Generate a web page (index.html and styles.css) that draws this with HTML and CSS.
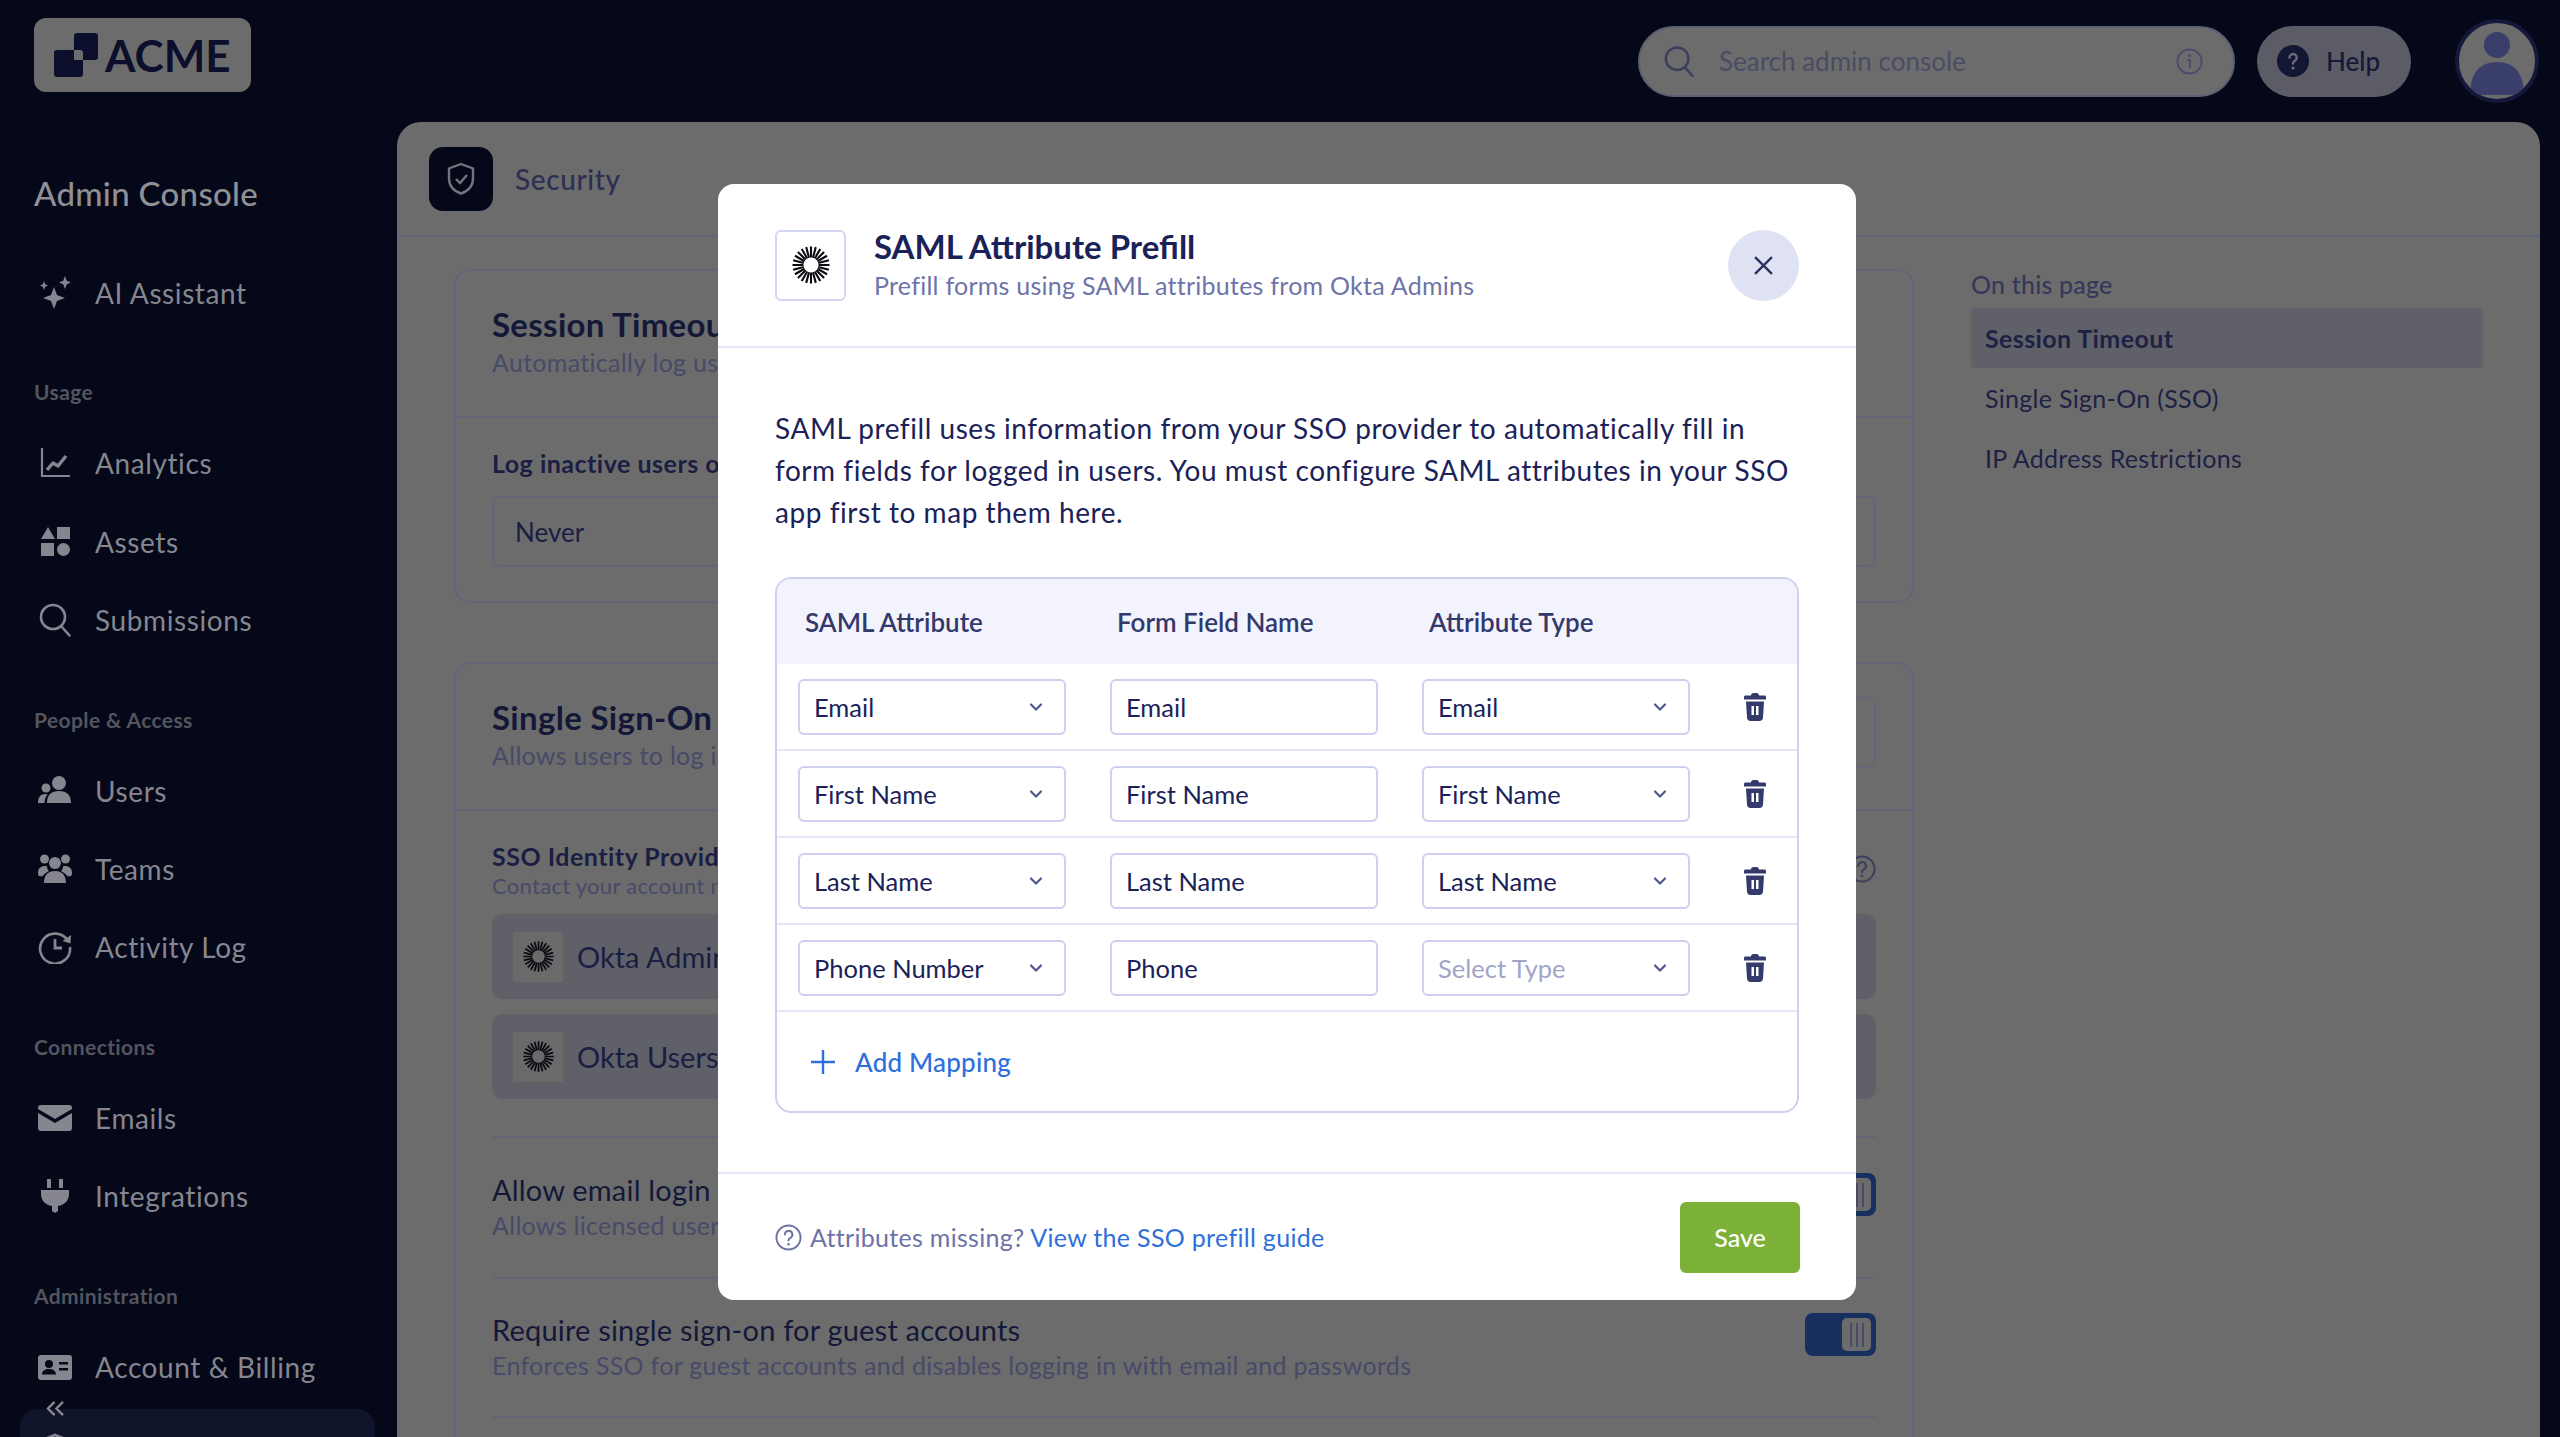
FILE: index.html
```html
<!DOCTYPE html>
<html lang="en">

<head>
    <meta charset="UTF-8" />
    <meta name="viewport" content="width=device-width, initial-scale=1.0" />
    <title>Security - Admin Console</title>
    <link rel="stylesheet" href="styles.css">
</head>

<body>
    <svg class="sprites" aria-hidden="true">
        <symbol id="okta" viewBox="0 0 40 40">
            <g fill="none" stroke="currentColor" stroke-width="2.100">
                <path d="M1.500 20H12.500M27.500 20H38.500" />
                <path d="M1.500 20H12.500M27.500 20H38.500" transform="rotate(15 20 20)" />
                <path d="M1.500 20H12.500M27.500 20H38.500" transform="rotate(30 20 20)" />
                <path d="M1.500 20H12.500M27.500 20H38.500" transform="rotate(45 20 20)" />
                <path d="M1.500 20H12.500M27.500 20H38.500" transform="rotate(60 20 20)" />
                <path d="M1.500 20H12.500M27.500 20H38.500" transform="rotate(75 20 20)" />
                <path d="M1.500 20H12.500M27.500 20H38.500" transform="rotate(90 20 20)" />
                <path d="M1.500 20H12.500M27.500 20H38.500" transform="rotate(105 20 20)" />
                <path d="M1.500 20H12.500M27.500 20H38.500" transform="rotate(120 20 20)" />
                <path d="M1.500 20H12.500M27.500 20H38.500" transform="rotate(135 20 20)" />
                <path d="M1.500 20H12.500M27.500 20H38.500" transform="rotate(150 20 20)" />
                <path d="M1.500 20H12.500M27.500 20H38.500" transform="rotate(165 20 20)" />
            </g>
        </symbol>
        <symbol id="trash" viewBox="0 0 22 28">
            <path fill="currentColor" fill-rule="evenodd" d="M7 2.500C7 1 8 0 9.500 0h3C14 0 15 1 15 2.500h5.500C21.400 2.500 22 3.100 22 4v2.500H0V4c0-.9.6-1.500 1.500-1.500zM2 8.500h18l-1 16c-.1 2-1.500 3.500-3.500 3.500h-9C4.500 28 3.100 26.500 3 24.500zM7.500 13v9h2.500v-9zM12 13v9h2.500v-9z" />
        </symbol>
        <symbol id="chev" viewBox="0 0 12 8">
            <path d="M1 1.500l5 5 5-5" fill="none" stroke="currentColor" stroke-width="2.200" stroke-linecap="round" stroke-linejoin="round" />
        </symbol>
        <symbol id="search" viewBox="0 0 32 34">
            <circle cx="14" cy="14" r="12" fill="none" stroke="currentColor" stroke-width="2.600" />
            <path d="M22.500 23.500l8 9" fill="none" stroke="currentColor" stroke-width="2.600" stroke-linecap="round" />
        </symbol>
        <symbol id="grip" viewBox="0 0 14 24">
            <path d="M1 0v24M7 0v24M13 0v24" stroke="currentColor" stroke-width="1.800" />
        </symbol>
        <symbol id="help" viewBox="0 0 28 28">
            <circle cx="14" cy="14" r="12.500" fill="none" stroke="currentColor" stroke-width="2" />
            <path d="M10.200 11a3.900 3.900 0 1 1 5.800 3.400c-1.300.7-2 1.400-2 2.800" fill="none" stroke="currentColor" stroke-width="2" stroke-linecap="round" />
            <circle cx="14" cy="21" r="1.300" fill="currentColor" />
        </symbol>
    </svg>

    <div class="app">
        <aside class="sidebar">
            <div class="logo">
                <svg class="logo-mark" viewBox="0 0 44 44">
                    <path fill="#0b0f2c" d="M20 3a3 3 0 0 1 3-3h18a3 3 0 0 1 3 3v21a3 3 0 0 1-3 3H29V20a3 3 0 0 0-3-3h-6z" />
                    <path fill="#0b0f2c" d="M3 17h17v10h9v14a3 3 0 0 1-3 3H3a3 3 0 0 1-3-3V20a3 3 0 0 1 3-3z" />
                </svg>
                <span>ACME</span>
            </div>
            <h2 class="console-title">Admin Console</h2>

            <a class="nav-item first">
                <svg class="nav-icon" viewBox="0 0 34 34"><path fill="currentColor" d="M16 11l3 8 8 3-8 3-3 8-3-8-8-3 8-3zM27 0l1.800 4.700L33 6.500l-4.200 1.800L27 13l-1.800-4.700L21 6.500l4.200-1.800zM6 5l1.200 3.300L10 9.500l-2.800 1.200L6 14l-1.200-3.300L2 9.500l2.800-1.200z" /></svg>
                AI Assistant
            </a>

            <div class="nav-label">Usage</div>
            <a class="nav-item">
                <svg class="nav-icon" viewBox="0 0 34 34"><path d="M4 2v28h28" fill="none" stroke="currentColor" stroke-width="2.200" /><path d="M9 24l6-7 5 3 8-10" fill="none" stroke="currentColor" stroke-width="3.400" stroke-linejoin="round" /></svg>
                Analytics
            </a>
            <a class="nav-item">
                <svg class="nav-icon" viewBox="0 0 34 34"><path fill="currentColor" d="M10 2l7 12H3zM19 2h13v12H19zM3 18h13v13H3z" /><circle cx="25.500" cy="24.500" r="6.500" fill="currentColor" /></svg>
                Assets
            </a>
            <a class="nav-item">
                <svg class="nav-icon" viewBox="0 0 32 34"><use href="#search" /></svg>
                Submissions
            </a>

            <div class="nav-label">People &amp; Access</div>
            <a class="nav-item">
                <svg class="nav-icon" viewBox="0 0 34 34"><circle cx="21" cy="9" r="7" fill="currentColor" /><circle cx="8" cy="14" r="4.500" fill="currentColor" /><path fill="currentColor" d="M9 29c0-8 4-12 12-12s12 4 12 12zM0 29c0-5 2-9 7-9 1 0 2 .2 2.500.5C7.500 22.500 6.500 25.500 6.500 29z" /></svg>
                Users
            </a>
            <a class="nav-item">
                <svg class="nav-icon" viewBox="0 0 34 34"><circle cx="17" cy="11" r="6" fill="currentColor" /><circle cx="6.500" cy="7" r="4.500" fill="currentColor" /><circle cx="27.500" cy="7" r="4.500" fill="currentColor" /><path fill="currentColor" d="M6 31c0-8 4-12 11-12s11 4 11 12zM0 21c0-5 3-7 7-7l2 .3c0 2 .8 3.700 2 5-3 1-5 3-6.500 5H2c-1.200 0-2-1.200-2-3.300zM34 21c0-5-3-7-7-7l-2 .3c0 2-.8 3.700-2 5 3 1 5 3 6.500 5H32c1.200 0 2-1.200 2-3.300z" /></svg>
                Teams
            </a>
            <a class="nav-item">
                <svg class="nav-icon" viewBox="0 0 34 34"><path d="M30 11a15 15 0 1 0 2 6" fill="none" stroke="currentColor" stroke-width="2.600" /><path fill="currentColor" d="M33 5l-.5 8.500-8-2.500z" /><path d="M17 9v9h7" fill="none" stroke="currentColor" stroke-width="2.800" /></svg>
                Activity Log
            </a>

            <div class="nav-label">Connections</div>
            <a class="nav-item">
                <svg class="nav-icon" viewBox="0 0 34 34"><path fill="currentColor" d="M3 4h28a3 3 0 0 1 3 3v1L17 18 0 8V7a3 3 0 0 1 3-3zM0 12l17 10 17-10v15a3 3 0 0 1-3 3H3a3 3 0 0 1-3-3z" /></svg>
                Emails
            </a>
            <a class="nav-item">
                <svg class="nav-icon" viewBox="0 0 34 34"><path fill="currentColor" d="M9 0h4v9H9zM21 0h4v9h-4zM3 11h28v4c0 6-4 11-11 12v5l-3 2-3-2v-5C7 26 3 21 3 15z" /></svg>
                Integrations
            </a>

            <div class="nav-label">Administration</div>
            <a class="nav-item">
                <svg class="nav-icon" viewBox="0 0 34 34"><path fill="currentColor" fill-rule="evenodd" d="M3 5h28a3 3 0 0 1 3 3v19a3 3 0 0 1-3 3H3a3 3 0 0 1-3-3V8a3 3 0 0 1 3-3zM11 10a4 4 0 1 0 0 8 4 4 0 0 0 0-8zM4 24.500h14c0-3.500-3-5.500-7-5.500s-7 2-7 5.500zM21 12v2.500h9V12zM21 18v2.500h9V18z" /></svg>
                Account &amp; Billing
            </a>
            <a class="nav-item current">
                <svg class="nav-icon" viewBox="0 0 34 34"><path d="M17 2l13 5v10c0 8-6 13-13 15C10 30 4 25 4 17V7z" fill="none" stroke="currentColor" stroke-width="2.600" /></svg>
                Security
            </a>

            <svg class="collapse" viewBox="0 0 20 16"><path d="M9 1L2 8l7 7M18 1l-7 7 7 7" fill="none" stroke="currentColor" stroke-width="2.600" /></svg>
        </aside>

        <div class="content">
            <header class="topbar">
                <div class="search">
                    <svg class="search-icon"><use href="#search" /></svg>
                    <span class="search-text">Search admin console</span>
                    <svg class="info-icon" viewBox="0 0 28 28"><circle cx="14" cy="14" r="12.500" fill="none" stroke="currentColor" stroke-width="2" /><path d="M11.500 12.500H14.500V21" fill="none" stroke="currentColor" stroke-width="2" /><circle cx="14" cy="8" r="1.500" fill="currentColor" /></svg>
                </div>
                <div class="help-pill">
                    <svg class="help-icon" viewBox="0 0 32 32"><circle cx="16" cy="16" r="16" fill="#141733" /><path d="M12.500 12.500a3.600 3.600 0 1 1 5.400 3.200c-1.200.7-1.900 1.300-1.900 2.700" fill="none" stroke="#6c6c78" stroke-width="2.400" stroke-linecap="round" /><circle cx="16" cy="23" r="1.600" fill="#6c6c78" /></svg>
                    Help
                </div>
                <div class="avatar">
                    <svg viewBox="0 0 76 76"><circle cx="38" cy="22" r="13" fill="#3a3e6b" /><path fill="#3a3e6b" d="M11 72c0-22 10-33 27-33s27 11 27 33z" /></svg>
                </div>
            </header>

            <main class="panel">
                <div class="panel-head">
                    <div class="panel-icon">
                        <svg viewBox="0 0 30 34"><path d="M15 2l12 4.500v10c0 7.500-5 12.500-12 15-7-2.500-12-7.500-12-15v-10z" fill="none" stroke="#74747c" stroke-width="2.400" /><path d="M10 17l4 4 7-8" fill="none" stroke="#74747c" stroke-width="2.400" /></svg>
                    </div>
                    <span class="panel-title">Security</span>
                </div>

                <div class="panel-body">
                    <div class="cards">
                        <section class="card">
                            <div class="card-head">
                                <h3>Session Timeout</h3>
                                <p>Automatically log users out after a period of inactivity</p>
                            </div>
                            <div class="card-body">
                                <div class="strong-label">Log inactive users out after</div>
                                <div class="page-input">Never</div>
                            </div>
                        </section>

                        <section class="card">
                            <div class="card-head sso-head">
                                <div>
                                    <h3>Single Sign-On (SSO)</h3>
                                    <p>Allows users to log in with your identity provider</p>
                                </div>
                                <div class="head-button"></div>
                            </div>
                            <div class="card-body">
                                <div class="provider-top">
                                    <div>
                                        <div class="strong-label tight">SSO Identity Providers</div>
                                        <p class="small-note">Contact your account manager to change providers</p>
                                    </div>
                                    <svg class="round-help"><use href="#help" /></svg>
                                </div>
                                <div class="provider">
                                    <div class="okta-box"><svg><use href="#okta" /></svg></div>
                                    Okta Admins
                                </div>
                                <div class="provider">
                                    <div class="okta-box"><svg><use href="#okta" /></svg></div>
                                    Okta Users
                                </div>
                                <div class="setting first-setting">
                                    <div class="setting-text">
                                        <div class="setting-title">Allow email login</div>
                                        <p>Allows licensed users to log in with email and password</p>
                                    </div>
                                    <div class="toggle"><span class="knob"><svg><use href="#grip" /></svg></span></div>
                                </div>
                                <div class="setting">
                                    <div class="setting-text">
                                        <div class="setting-title">Require single sign-on for guest accounts</div>
                                        <p>Enforces SSO for guest accounts and disables logging in with email and passwords</p>
                                    </div>
                                    <div class="toggle"><span class="knob"><svg><use href="#grip" /></svg></span></div>
                                </div>
                            </div>
                        </section>
                    </div>

                    <nav class="toc">
                        <div class="toc-title">On this page</div>
                        <a class="toc-item active">Session Timeout</a>
                        <a class="toc-item">Single Sign-On (SSO)</a>
                        <a class="toc-item">IP Address Restrictions</a>
                    </nav>
                </div>
            </main>
        </div>
    </div>

    <div class="modal">
        <div class="modal-head">
            <div class="modal-icon"><svg><use href="#okta" /></svg></div>
            <div class="modal-heading">
                <h2>SAML Attribute Prefill</h2>
                <p>Prefill forms using SAML attributes from Okta Admins</p>
            </div>
            <button class="close-button">
                <svg viewBox="0 0 18 18"><path d="M1 1l16 16M17 1L1 17" fill="none" stroke="#2b3160" stroke-width="2.200" /></svg>
            </button>
        </div>

        <div class="modal-body">
            <p class="intro">SAML prefill uses information from your SSO provider to automatically fill in form fields for logged in users. You must configure SAML attributes in your SSO app first to map them here.</p>

            <div class="mapping">
                <div class="map-row map-head">
                    <div>SAML Attribute</div>
                    <div>Form Field Name</div>
                    <div>Attribute Type</div>
                </div>
                <div class="map-row">
                    <div class="field select">Email<svg><use href="#chev" /></svg></div>
                    <div class="field">Email</div>
                    <div class="field select">Email<svg><use href="#chev" /></svg></div>
                    <svg class="trash"><use href="#trash" /></svg>
                </div>
                <div class="map-row">
                    <div class="field select">First Name<svg><use href="#chev" /></svg></div>
                    <div class="field">First Name</div>
                    <div class="field select">First Name<svg><use href="#chev" /></svg></div>
                    <svg class="trash"><use href="#trash" /></svg>
                </div>
                <div class="map-row">
                    <div class="field select">Last Name<svg><use href="#chev" /></svg></div>
                    <div class="field">Last Name</div>
                    <div class="field select">Last Name<svg><use href="#chev" /></svg></div>
                    <svg class="trash"><use href="#trash" /></svg>
                </div>
                <div class="map-row">
                    <div class="field select">Phone Number<svg><use href="#chev" /></svg></div>
                    <div class="field">Phone</div>
                    <div class="field select placeholder">Select Type<svg><use href="#chev" /></svg></div>
                    <svg class="trash"><use href="#trash" /></svg>
                </div>
                <div class="add-row">
                    <svg viewBox="0 0 24 24"><path d="M12 0v24M0 12h24" fill="none" stroke="currentColor" stroke-width="2.400" /></svg>
                    Add Mapping
                </div>
            </div>
        </div>

        <div class="modal-foot">
            <svg class="foot-help"><use href="#help" /></svg>
            <span class="foot-text">Attributes missing? <a>View the SSO prefill guide</a></span>
            <button class="save-button">Save</button>
        </div>
    </div>
</body>

</html>
```

FILE: styles.css
```css
* {
    box-sizing: border-box;
}

html,
body {
    margin: 0;
    height: 1437px;
    overflow: hidden;
}

body {
    background-color: #050819;
    font-family: "Lato", "Liberation Sans", sans-serif;
    color: #141838;
    font-size: 28px;
    position: relative;
}

p,
h2,
h3 {
    margin: 0;
    font-weight: normal;
}

.sprites {
    display: none;
}

.app {
    display: flex;
    height: 1437px;
}

/* sidebar */
.sidebar {
    width: 397px;
    flex-shrink: 0;
    padding: 18px 22px 0 20px;
    color: #85868f;
    position: relative;
    display: flex;
    flex-direction: column;
    overflow: hidden;
}

.logo {
    width: 217px;
    height: 74px;
    margin-left: 14px;
    background-color: #6c6c6c;
    border-radius: 12px;
    display: flex;
    align-items: center;
    gap: 7px;
    padding-left: 20px;
    color: #0b0f2c;
    font-size: 44px;
    font-weight: 700;
    flex-shrink: 0;
}

.logo-mark {
    width: 44px;
    height: 44px;
}

.console-title {
    margin: 81px 0 43px 14px;
    height: 40px;
    line-height: 40px;
    font-size: 33px;
    font-weight: 500;
    letter-spacing: 0.3px;
    color: #8f9096;
}

.nav-item {
    height: 74px;
    margin-bottom: 4.400px;
    padding-left: 18px;
    display: flex;
    align-items: center;
    gap: 23px;
    font-size: 28px;
    flex-shrink: 0;
    letter-spacing: 0.6px;
}

.nav-icon {
    width: 34px;
    height: 34px;
    flex-shrink: 0;
}

.nav-label {
    margin: 43px 0 19px 14px;
    height: 30px;
    line-height: 30px;
    font-size: 21px;
    font-weight: 700;
    letter-spacing: 0.4px;
    color: #53555f;
    flex-shrink: 0;
}

.nav-item.current {
    height: 82px;
    margin-top: 1px;
    background-color: #10142a;
    border-radius: 18px;
}

.collapse {
    position: absolute;
    left: 46px;
    top: 1401px;
    width: 19px;
    height: 15px;
}

/* top bar and panel */
.content {
    flex: 1;
    min-width: 0;
    display: flex;
    flex-direction: column;
}

.topbar {
    height: 122px;
    flex-shrink: 0;
    display: flex;
    align-items: center;
    justify-content: flex-end;
    padding-right: 21px;
}

.search {
    width: 597px;
    height: 71px;
    background-color: #6c6c6c;
    border: 2px solid #5d5f70;
    border-radius: 36px;
    display: flex;
    align-items: center;
    padding: 0 30px 0 24px;
    color: #3c3f5c;
}

.search-icon {
    width: 30px;
    height: 33px;
    margin-right: 25px;
    flex-shrink: 0;
}

.search-text {
    flex: 1;
    font-size: 26px;
    color: #4a4c64;
}

.info-icon {
    width: 27px;
    height: 27px;
    color: #4a4d6c;
}

.help-pill {
    width: 154px;
    height: 71px;
    margin-left: 22px;
    background-color: #5b5c66;
    border-radius: 36px;
    display: flex;
    align-items: center;
    gap: 17px;
    padding-left: 20px;
    font-size: 26px;
    font-weight: 500;
    color: #15183a;
}

.help-icon {
    width: 32px;
    height: 32px;
}

.avatar {
    width: 84px;
    height: 84px;
    margin-left: 44px;
    border-radius: 50%;
    border: 4px solid #14183a;
    background-color: #6c6c6c;
    overflow: hidden;
}

.avatar svg {
    display: block;
    width: 76px;
    height: 76px;
}

.panel {
    flex: 1;
    min-height: 0;
    margin-right: 20px;
    background-color: #6c6c6c;
    border-radius: 24px 24px 0 0;
    overflow: hidden;
}

.panel-head {
    height: 115px;
    padding-left: 32px;
    border-bottom: 2px solid #62657a;
    display: flex;
    align-items: center;
    gap: 22px;
}

.panel-icon {
    width: 64px;
    height: 64px;
    border-radius: 14px;
    background-color: #050819;
    display: flex;
    align-items: center;
    justify-content: center;
}

.panel-icon svg {
    width: 30px;
    height: 34px;
}

.panel-title {
    font-size: 28px;
    font-weight: 500;
    letter-spacing: 0.6px;
    color: #2c2f50;
}

.panel-body {
    display: flex;
    padding: 32px 0 0 57px;
}

.cards {
    width: 1460px;
    flex-shrink: 0;
}

.card {
    border: 2px solid #62657a;
    border-radius: 16px;
    margin-bottom: 59px;
}

.card-head {
    height: 147px;
    padding: 33px 36px 0;
    border-bottom: 2px solid #62657a;
}

.card h3 {
    font-size: 33px;
    font-weight: 700;
    letter-spacing: 0.3px;
    line-height: 40px;
    color: #141838;
}

.card-head p {
    font-size: 25px;
    letter-spacing: 0.3px;
    line-height: 37px;
    color: #474a68;
}

.sso-head {
    display: flex;
    justify-content: space-between;
    padding-right: 36px;
}

.head-button {
    width: 120px;
    height: 71px;
    border: 2px solid #646778;
    border-radius: 10px;
}

.card-body {
    padding: 28px 36px 34px;
}

.strong-label {
    font-size: 25px;
    font-weight: 700;
    letter-spacing: 0.5px;
    line-height: 34px;
    color: #1a1e42;
    margin-bottom: 16px;
}

.strong-label.tight {
    margin-bottom: 0;
}

.page-input {
    height: 71px;
    border: 2px solid #62657a;
    border-radius: 8px;
    padding: 0 21px;
    display: flex;
    align-items: center;
    font-size: 26px;
    color: #1a1e42;
}

.provider-top {
    display: flex;
    justify-content: space-between;
    align-items: center;
    margin-bottom: 15px;
}

.small-note {
    font-size: 22px;
    letter-spacing: 0.3px;
    line-height: 26px;
    color: #474a68;
}

.round-help {
    width: 28px;
    height: 28px;
    color: #3c3f5c;
}

.provider {
    height: 85px;
    margin-bottom: 15px;
    background-color: #5f6068;
    border-radius: 10px;
    display: flex;
    align-items: center;
    gap: 14px;
    padding-left: 21px;
    font-size: 29px;
    color: #1a1e42;
}

.okta-box {
    width: 50px;
    height: 50px;
    background-color: #6a6a6a;
    display: flex;
    align-items: center;
    justify-content: center;
    color: #0a0a12;
}

.okta-box svg {
    width: 33px;
    height: 33px;
}

.setting {
    height: 141px;
    border-top: 2px solid #62657a;
    display: flex;
    justify-content: space-between;
    align-items: center;
}

.setting:last-child {
    border-bottom: 2px solid #62657a;
}

.first-setting {
    margin-top: 37px;
}

.setting-text {
    margin-bottom: 3px;
}

.setting-title {
    font-size: 29px;
    letter-spacing: 0.2px;
    line-height: 38px;
    color: #141838;
}

.setting p {
    font-size: 25px;
    letter-spacing: 0.3px;
    line-height: 32px;
    color: #474a68;
}

.toggle {
    width: 71px;
    height: 43px;
    margin-bottom: 26px;
    background-color: #17305f;
    border-radius: 8px;
    display: flex;
    align-items: center;
    justify-content: flex-end;
    padding-right: 5px;
}

.knob {
    width: 29px;
    height: 33px;
    background-color: #6c6c6c;
    border-radius: 5px;
    display: flex;
    align-items: center;
    justify-content: center;
    color: #45486a;
}

.knob svg {
    width: 14px;
    height: 24px;
}

.toc {
    width: 512px;
    margin-left: 57px;
}

.toc-title {
    height: 39px;
    line-height: 30px;
    font-size: 25px;
    font-weight: 500;
    letter-spacing: 0.2px;
    color: #35385a;
}

.toc-item {
    display: block;
    height: 60px;
    line-height: 60px;
    padding-left: 14px;
    font-size: 25px;
    letter-spacing: 0.3px;
    color: #1d2145;
}

.toc-item.active {
    background-color: #606168;
    font-weight: 700;
    letter-spacing: 0.4px;
    border-radius: 4px;
}

/* modal */
.modal {
    position: absolute;
    left: 718px;
    top: 184px;
    width: 1138px;
    height: 1116px;
    background-color: #fff;
    border-radius: 16px;
    display: flex;
    flex-direction: column;
    color: #1a2258;
}

.modal-head {
    height: 164px;
    flex-shrink: 0;
    padding: 0 57px;
    border-bottom: 2px solid #e4e6f7;
    display: flex;
    align-items: center;
    gap: 28px;
}

.modal-icon {
    width: 71px;
    height: 71px;
    border: 2px solid #d3d7f1;
    border-radius: 6px;
    display: flex;
    align-items: center;
    justify-content: center;
    color: #0a0a12;
    flex-shrink: 0;
}

.modal-icon svg {
    width: 40px;
    height: 40px;
}

.modal-heading {
    flex: 1;
}

.modal-heading h2 {
    font-size: 33px;
    font-weight: 700;
    line-height: 40px;
}

.modal-heading p {
    font-size: 25px;
    letter-spacing: 0.25px;
    line-height: 38px;
    color: #6d74a8;
}

.close-button {
    width: 71px;
    height: 71px;
    padding: 0;
    border: 0;
    border-radius: 50%;
    background-color: #dfe2f3;
    display: flex;
    align-items: center;
    justify-content: center;
}

.close-button svg {
    width: 19px;
    height: 19px;
}

.modal-body {
    flex: 1;
    padding: 59px 57px 0;
}

.intro {
    font-size: 28px;
    letter-spacing: 0.55px;
    line-height: 42px;
    margin-bottom: 44px;
}

.mapping {
    height: 536px;
    border: 2px solid #cdd1ef;
    border-radius: 16px;
    overflow: hidden;
}

.map-row {
    height: 87px;
    padding-left: 21px;
    border-bottom: 2px solid #e4e6f7;
    display: grid;
    grid-template-columns: 268px 268px 268px 22px;
    column-gap: 44px;
    align-items: center;
}

.map-row .trash {
    margin-left: 10px;
}

.map-head {
    height: 85px;
    background-color: #f2f3fd;
    border-bottom: 0;
    font-size: 26px;
    font-weight: 600;
    color: #33396b;
}

.map-head div {
    padding-left: 7px;
}

.field {
    height: 56px;
    padding: 0 22px 0 14px;
    border: 2px solid #cdd1ef;
    border-radius: 6px;
    display: flex;
    align-items: center;
    justify-content: space-between;
    font-size: 25.500px;
}

.field svg {
    width: 12px;
    height: 8px;
    color: #50568e;
}

.placeholder {
    color: #a0a5c8;
}

.trash {
    width: 22px;
    height: 28px;
    color: #343a6b;
}

.add-row {
    height: 99px;
    padding-left: 34px;
    display: flex;
    align-items: center;
    gap: 20px;
    color: #2e6fdc;
    font-size: 26px;
    letter-spacing: 0.2px;
    font-weight: 500;
}

.add-row svg {
    width: 24px;
    height: 24px;
}

.modal-foot {
    height: 128px;
    flex-shrink: 0;
    padding: 0 56px 0 57px;
    border-top: 2px solid #e4e6f7;
    display: flex;
    align-items: center;
    gap: 8px;
}

.foot-help {
    width: 27px;
    height: 27px;
    color: #6d72a6;
}

.foot-text {
    flex: 1;
    font-size: 25px;
    letter-spacing: 0.3px;
    color: #6d72a6;
}

.foot-text a {
    color: #2e6fdc;
}

.save-button {
    width: 120px;
    height: 71px;
    border: 0;
    border-radius: 6px;
    background-color: #7cb138;
    color: #fff;
    font-family: inherit;
    font-size: 25px;
    font-weight: 500;
}
```
